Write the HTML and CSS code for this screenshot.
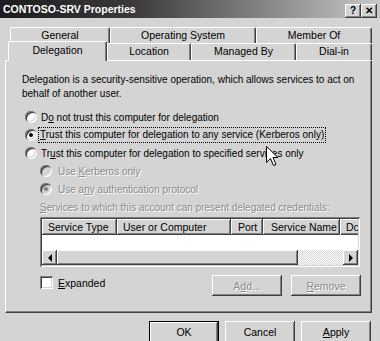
FILE: index.html
```html
<!DOCTYPE html>
<html lang="en">
  <head>
    <meta charset="UTF-8" />
    <title>CONTOSO-SRV Properties</title>
    <link rel="stylesheet" href="styles.css">
  </head>
  <body>
    <div class="titlebar">
      <span class="title">CONTOSO-SRV Properties</span>
      <div class="caption-btns">
        <span class="cap-btn">?</span>
        <span class="cap-btn">&#x2715;</span>
      </div>
    </div>

    <div class="tabs">
      <div class="tab-row back">
        <div class="tab w-general">General</div>
        <div class="tab w-os">Operating System</div>
        <div class="tab w-member">Member Of</div>
      </div>
      <div class="tab-row front">
        <div class="tab active w-delegation">Delegation</div>
        <div class="tab w-location">Location</div>
        <div class="tab w-managed">Managed By</div>
        <div class="tab w-dialin">Dial-in</div>
      </div>
    </div>

    <div class="panel">
      <p class="intro">Delegation is a security-sensitive operation, which allows services to act on<br>behalf of another user.</p>

      <div class="options">
        <div class="radio-row">
          <span class="radio"></span>
          <span>D<u>o</u> not trust this computer for delegation</span>
        </div>
        <div class="radio-row">
          <span class="radio checked"></span>
          <span class="focus"><u>T</u>rust this computer for delegation to any service (Kerberos only)</span>
        </div>
        <div class="radio-row">
          <span class="radio"></span>
          <span>Tr<u>u</u>st this computer for delegation to specified services only</span>
        </div>
        <div class="radio-row sub disabled">
          <span class="radio"></span>
          <span>Use <u>K</u>erberos only</span>
        </div>
        <div class="radio-row sub disabled">
          <span class="radio checked"></span>
          <span>Use a<u>n</u>y authentication protocol</span>
        </div>
      </div>

      <div class="list-label disabled"><u>S</u>ervices to which this account can present delegated credentials:</div>

      <div class="list">
        <div class="list-head">
          <div class="col c-type">Service Type</div>
          <div class="col c-user">User or Computer</div>
          <div class="col c-port">Port</div>
          <div class="col c-name">Service Name</div>
          <div class="col c-dom">Dc</div>
        </div>
        <div class="list-body"></div>
        <div class="hscroll">
          <div class="sb-btn"><span class="arrow left"></span></div>
          <div class="sb-thumb"></div>
          <div class="sb-track"></div>
          <div class="sb-btn"><span class="arrow right"></span></div>
        </div>
      </div>

      <div class="list-footer">
        <label class="check-row">
          <span class="checkbox"></span>
          <span><u>E</u>xpanded</span>
        </label>
        <div class="list-buttons">
          <button class="btn disabled">A<u>d</u>d...</button>
          <button class="btn disabled"><u>R</u>emove</button>
        </div>
      </div>
    </div>

    <div class="actions">
      <button class="btn default">OK</button>
      <button class="btn">Cancel</button>
      <button class="btn"><u>A</u>pply</button>
    </div>

    <svg class="cursor" width="13" height="21" viewBox="0 0 13 21">
      <path d="M0.5 0.5 L0.5 16.5 L4.5 12.5 L7.5 19.5 L10 18.5 L7 11.5 L12 11.5 Z" fill="#fff" stroke="#000" stroke-width="1" />
    </svg>
  </body>
</html>
```

FILE: styles.css
```css
* {
  margin: 0;
  padding: 0;
  box-sizing: border-box;
}

body {
  background-color: #d4d4d4;
  font-family: "Liberation Sans", Arial, sans-serif;
  font-size: 10px;
  color: #000;
  width: 380px;
  height: 341px;
  overflow: hidden;
  position: relative;
}

u {
  text-decoration: underline;
}

/* Title bar */
.titlebar {
  height: 18px;
  display: flex;
  align-items: center;
  justify-content: space-between;
  padding: 0 3px;
  background: linear-gradient(to right, #1c1c1c, #3a3a3a 35%, #c8c8c8);
}

.title {
  color: #fff;
  font-weight: bold;
  font-size: 10.5px;
}

.caption-btns {
  display: flex;
  margin-top: 3px;
}

.cap-btn {
  width: 16px;
  height: 14px;
  background-color: #d4d4d4;
  box-shadow: inset -1px -1px #404040, inset 1px 1px #fff, inset -2px -2px #808080;
  font-weight: bold;
  font-size: 10px;
  line-height: 14px;
  text-align: center;
}

/* Tabs */
.tabs {
  margin-top: 9px;
}

.tab-row {
  display: flex;
}

.tab-row.back {
  margin-left: 10px;
  height: 16px;
}

.tab-row.front {
  margin-left: 8px;
  height: 17px;
}

.tab {
  border-top: 1px solid #fff;
  border-left: 1px solid #fff;
  border-right: 1px solid #404040;
  border-radius: 2px 2px 0 0;
  box-shadow: inset -1px 0 #808080;
  text-align: center;
  line-height: 15px;
  height: 100%;
  font-size: 10.5px;
}

.tab.active {
  height: 20px;
  margin-top: -2px;
  position: relative;
  z-index: 1;
  background-color: #d4d4d4;
  line-height: 16px;
}

.w-general { width: 100px; }
.w-os { width: 146px; }
.w-member { width: 116px; }
.w-delegation { width: 99px; }
.w-location { width: 84px; }
.w-managed { width: 105px; }
.w-dialin { width: 76px; }

/* Panel */
.panel {
  margin-left: 5px;
  width: 367px;
  height: 253px;
  border-top: 1px solid #fff;
  border-left: 1px solid #fff;
  border-right: 1px solid #404040;
  border-bottom: 1px solid #404040;
  box-shadow: inset -1px -1px #808080;
  padding: 12px 0 0 16px;
}

.intro {
  line-height: 14px;
  white-space: nowrap;
}

.options {
  margin-top: 7px;
}

.radio-row {
  display: flex;
  align-items: center;
  height: 18px;
  gap: 4px;
  padding-left: 3px;
}

.radio-row.sub {
  padding-left: 18px;
  gap: 6px;
}

.radio {
  width: 12px;
  height: 12px;
  border-radius: 50%;
  background-color: #fff;
  box-shadow: inset 1px 1px #808080, inset -1px -1px #fff, inset 2px 2px #404040, inset -2px -2px #d4d4d4;
  display: flex;
  align-items: center;
  justify-content: center;
}

.radio.checked::after {
  content: "";
  width: 4px;
  height: 4px;
  border-radius: 50%;
  background-color: #000;
}

.focus {
  outline: 1px dotted #000;
  padding: 0 1px;
  margin-left: -2px;
  line-height: 14px;
}

.disabled {
  color: #8a8a8a;
  text-shadow: 1px 1px 0 #fff;
}

.disabled .radio {
  background-color: #d4d4d4;
}

.disabled .radio.checked::after {
  background-color: #808080;
}

.list-label {
  margin-top: 3px;
  margin-left: 18px;
  line-height: 14px;
  white-space: nowrap;
}

/* List view */
.list {
  margin-top: 2px;
  margin-left: 18px;
  width: 320px;
  height: 50px;
  background-color: #fff;
  padding: 2px;
  box-shadow: inset 1px 1px #808080, inset -1px -1px #fff, inset 2px 2px #404040, inset -2px -2px #d4d4d4;
  display: flex;
  flex-direction: column;
  overflow: hidden;
}

.list-head {
  display: flex;
  height: 16px;
  flex-shrink: 0;
  overflow: hidden;
}

.col {
  background-color: #d4d4d4;
  box-shadow: inset -1px -1px #404040, inset 1px 1px #fff, inset -2px -2px #808080;
  line-height: 16px;
  padding-left: 6px;
  white-space: nowrap;
  overflow: hidden;
  flex-shrink: 0;
  font-size: 10.5px;
}

.c-type { width: 75px; }
.c-user { width: 114px; }
.c-port { width: 32px; padding-left: 7px; }
.c-name { width: 77px; padding-left: 8px; }
.c-dom {
  flex: 1;
  min-width: 0;
  box-shadow: inset 1px 1px #fff, inset 0 -1px #404040, inset 0 -2px #808080;
}

.list-body {
  flex: 1;
}

.hscroll {
  display: flex;
  height: 15px;
}

.sb-btn {
  width: 15px;
  background-color: #d4d4d4;
  box-shadow: inset -1px -1px #404040, inset 1px 1px #fff, inset -2px -2px #808080;
  display: flex;
  align-items: center;
  justify-content: center;
}

.arrow {
  width: 0;
  height: 0;
  border-top: 4px solid transparent;
  border-bottom: 4px solid transparent;
}

.arrow.left {
  border-right: 4px solid #000;
}

.arrow.right {
  border-left: 4px solid #000;
}

.sb-thumb {
  width: 241px;
  background-color: #d4d4d4;
  box-shadow: inset -1px -1px #404040, inset 1px 1px #fff, inset -2px -2px #808080;
}

.sb-track {
  flex: 1;
  background-image: repeating-conic-gradient(#fff 0 25%, #d4d4d4 0 50%);
  background-size: 2px 2px;
}

.list-footer {
  margin-top: 8px;
  margin-left: 18px;
  width: 321px;
  display: flex;
  justify-content: space-between;
}

.check-row {
  display: flex;
  align-items: center;
  gap: 5px;
  height: 15px;
  font-size: 10.5px;
}

.checkbox {
  width: 13px;
  height: 13px;
  background-color: #fff;
  box-shadow: inset 1px 1px #808080, inset -1px -1px #fff, inset 2px 2px #404040, inset -2px -2px #d4d4d4;
}

.list-buttons {
  display: flex;
  gap: 9px;
}

/* Buttons */
.btn {
  width: 70px;
  height: 21px;
  border: none;
  background-color: #d4d4d4;
  box-shadow: inset -1px -1px #404040, inset 1px 1px #fff, inset -2px -2px #808080;
  font-family: inherit;
  font-size: 10.5px;
  color: #000;
}

.btn.disabled {
  color: #8a8a8a;
  text-shadow: 1px 1px 0 #fff;
}

.actions {
  display: flex;
  justify-content: flex-end;
  gap: 6px;
  margin-top: 8px;
  padding-right: 9px;
}

.actions .btn {
  height: 23px;
  padding-bottom: 2px;
}

.btn.default {
  box-shadow: inset 0 0 0 1px #000, inset -2px -2px #404040, inset 2px 2px #fff, inset -3px -3px #808080;
}

.cursor {
  position: absolute;
  left: 266px;
  top: 146px;
}
```
